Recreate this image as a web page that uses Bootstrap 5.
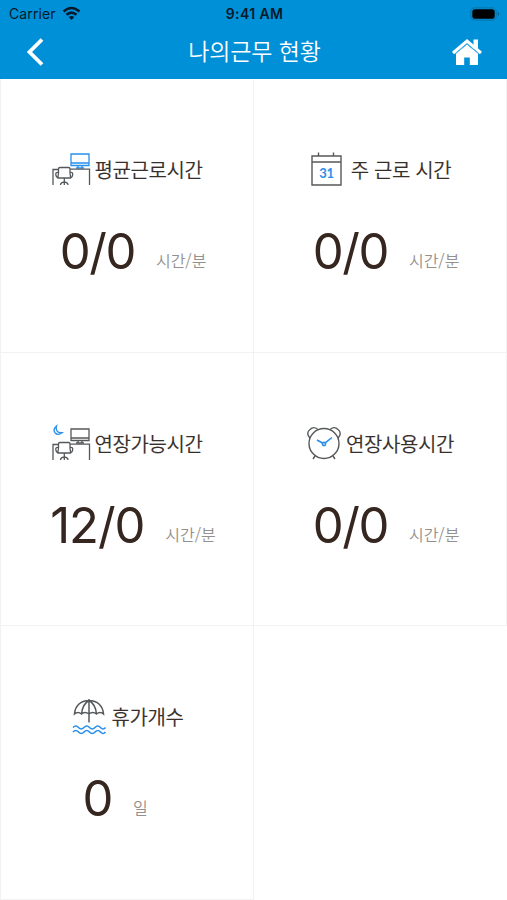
<!DOCTYPE html>
<html lang="ko">
<head>
<meta charset="utf-8">
<meta name="viewport" content="width=device-width, initial-scale=1">
<title>나의근무 현황</title>
<link href="https://cdn.jsdelivr.net/npm/bootstrap@5.3.0/dist/css/bootstrap.min.css" rel="stylesheet">
<style>
  body { font-family: Inter, "Noto Sans CJK KR", sans-serif; background: #fff; overflow: hidden; }
  svg { display: block; flex: none; }
  .top-area { background: #0090d7; height: 79px; }
  .status-line { height: 27px; padding: 0 7px 0 9px; font-size: 14px; line-height: 27px; color: #07192a; display: grid; grid-template-columns: 1fr auto 1fr; }
  .status-line .carrier { letter-spacing: .1px; }
  .status-line .clock { font-weight: 600; font-size: 14px; letter-spacing: .4px; }
  .title-line { height: 50px; padding: 0 24px 0 26px; display: grid; grid-template-columns: 1fr auto 1fr; color: #fff; }
  .title-line h1 { font: 350 23px/46px "Noto Sans CJK KR", sans-serif; letter-spacing: -.1px; }
  .tiles { height: 821px; display: grid; grid-template-columns: 254px 253px; grid-template-rows: 274px 273px 274px; }
  .tile { border: 1px solid #f2f2f2; border-width: 0 1px 1px 0; }
  .tile.edge { border-left-width: 1px; }
  .tile-label { height: 40px; margin-top: 71px; font: 350 20px/40px "Noto Sans CJK KR", sans-serif; letter-spacing: -.4px; color: #372f2a; white-space: pre; -webkit-text-stroke: .15px #372f2a; }
  .tile-label svg { -webkit-text-stroke: 0; }
  .tile-value { height: 60px; margin-top: 32px; padding-left: 12px; color: #35261f; white-space: nowrap; }
  .tile-value.days { padding-left: 0; padding-right: 24px; }
  .figure-num { font-size: 49px; line-height: 60px; letter-spacing: -1.4px; }
  .figure-num.wide { letter-spacing: -1.1px; }
  .unit { font: 350 16px/24px "Noto Sans CJK KR", sans-serif; color: #94908d; padding-bottom: 10px; margin-left: 21px; align-self: flex-end; }
  .week-text { letter-spacing: -.4px; }
</style>
</head>
<body>
<svg width="0" height="0" class="position-absolute" aria-hidden="true">
  <symbol id="monitor" viewBox="0 0 20 17"><path d="M1 1h18v11.500H1zM1 10h18M8 12.500v2.300M12 12.500v2.300M6 15h8"/></symbol>
  <symbol id="desk" viewBox="0 0 39 20"><path d="M1 19V3.500H6M18.500 3.200H37.500V19M6.500 5V2.800Q6.500 1.500 8 1.500H16.500Q18 1.500 18 2.800V7Q18.500 10 18.500 12H6Q6 10 6.500 7ZM6.300 6.500Q3.500 6.200 3.800 8.500Q4 11.500 6.500 12M18.300 6.500Q21 6.200 20.700 8.500Q20.500 11.500 18 12M12.300 12V19M8.500 19Q8.500 16.500 12.300 16Q16 16.500 16 19"/></symbol>
</svg>
<header class="top-area">
  <div class="status-line">
    <div class="d-flex align-items-center"><span class="carrier">Carrier</span>
      <svg class="ms-2" width="18" height="14" viewBox="1.500 0 18 14" fill="none" stroke="#07192a" stroke-width="2.500" overflow="visible"><path d="M1 4.500Q9-2.500 17 4.500M4 7.800Q9 3.500 14 7.800"/><path d="M6.200 10.100Q9 8 11.800 10.100L9 13Z" fill="#07192a" stroke="none"/></svg>
    </div>
    <div class="clock">9:41 AM</div>
    <div class="d-flex align-items-center justify-content-end">
      <svg width="30" height="14" viewBox="0 0 30 14"><rect x=".8" y=".8" width="25.400" height="12.400" rx="4" fill="none" stroke="#0678b3" stroke-width="1.200"/><rect x="2.300" y="2.300" width="22.400" height="9.400" rx="2.800" fill="#000"/><path d="M27.700 5v4q1.500-.5 1.500-2t-1.500-2" fill="#075f8d"/></svg>
    </div>
  </div>
  <div class="title-line">
    <div class="d-flex align-items-center"><svg width="19" height="28" viewBox="0 0 19 28" fill="none" stroke="#fff" stroke-width="3.800"><path d="M16 1.500L3.500 14L16 26.500"/></svg></div>
    <h1 class="m-0">나의근무 현황</h1>
    <div class="d-flex align-items-center justify-content-end"><svg width="32" height="28" viewBox="0 0 32 28"><path d="M2 15L16 3L30 15" fill="none" stroke="#fff" stroke-width="3"/><path d="M22.500 1.500H27V11L22.500 7.500ZM5 15.500L16 6.500L27 15.500V27H18.800V19.500H13.200V27H5Z" fill="#fff"/><path d="M4 16L16 6L28 16" fill="none" stroke="#4fb3e4" stroke-width=".9"/></svg></div>
  </div>
</header>
<main class="tiles">
  <section class="tile edge">
    <div class="tile-label d-flex justify-content-center align-items-center">
      <svg width="39" height="36" viewBox="0 0 39 36" fill="none" stroke="#55585a" stroke-width="1.300"><use href="#monitor" x="18" y="1" width="20" height="17" stroke="#278fec"/><use href="#desk" x="0" y="14" width="39" height="20"/></svg><span class="ms-1">평균근로시간</span>
    </div>
    <div class="tile-value d-flex justify-content-center align-items-baseline"><span class="figure-num">0/0</span><span class="unit">시간/분</span></div>
  </section>
  <section class="tile">
    <div class="tile-label d-flex justify-content-center align-items-center">
      <svg width="34" height="36" viewBox="0 0 34 36" fill="none" stroke="#55585a" stroke-width="1.400"><path d="M3 4H32V33H3ZM3 10H32M9.500 .500V4M24.500 .500V4"/><text x="17.500" y="26" text-anchor="middle" font-family="Lato, sans-serif" font-size="13" font-weight="700" letter-spacing="-.3" fill="#278fec" stroke="none">31</text></svg><span class="week-text ms-2 ps-0">주 근로 시간</span>
    </div>
    <div class="tile-value d-flex justify-content-center align-items-baseline"><span class="figure-num">0/0</span><span class="unit">시간/분</span></div>
  </section>
  <section class="tile edge">
    <div class="tile-label d-flex justify-content-center align-items-center">
      <svg width="39" height="40" viewBox="0 0 39 40" fill="none" stroke="#55585a" stroke-width="1.300"><path d="M4.500 2Q.5 5.500 3 8.700Q6 12 10 8.700Q6 9 4.800 6.500Q3.800 4.500 4.500 2Z" stroke="#278fec"/><use href="#monitor" x="18" y="4" width="20" height="17"/><use href="#desk" x="0" y="17" width="39" height="20"/></svg><span class="ms-1">연장가능시간</span>
    </div>
    <div class="tile-value d-flex justify-content-center align-items-baseline"><span class="figure-num wide">12/0</span><span class="unit">시간/분</span></div>
  </section>
  <section class="tile">
    <div class="tile-label d-flex justify-content-center align-items-center">
      <svg width="36" height="36" viewBox="0 0 36 36" fill="none" stroke="#55585a" stroke-width="1.400"><circle cx="18" cy="17.500" r="15"/><path d="M4 12Q-.5 7 4 3.500Q8-.5 12.500 4M23.500 4Q28-.5 32 3.500Q36.500 7 32 12M9 30L7 33M27 30L29 33"/><g stroke="#278fec" stroke-width="1.600"><path d="M11 14L16.500 17M19.500 16.700L26 11.500"/><circle cx="18" cy="18" r="1.600"/></g></svg><span class="ms-1">연장사용시간</span>
    </div>
    <div class="tile-value d-flex justify-content-center align-items-baseline"><span class="figure-num">0/0</span><span class="unit">시간/분</span></div>
  </section>
  <section class="tile edge">
    <div class="tile-label d-flex justify-content-center align-items-center">
      <svg width="37" height="38" viewBox="0 0 37 38" fill="none" stroke="#55585a" stroke-width="1.500"><path d="M3.500 16C4 8 9.500 2.500 18 2.500S32 8 32.500 16Q29 13 25.500 16Q21.500 13 18 16Q14 13 10.500 16Q7 13 3.500 16ZM10.500 16Q11.500 6 18 2.500Q24.500 6 25.500 16M18 1V24.500"/><g stroke="#278fec" stroke-width="1.600"><path d="M2 29.500q2.750-3 5.500 0t5.500 0t5.500 0t5.500 0t5.500 0t5 0M2 34q2.750-3 5.500 0t5.500 0t5.500 0t5.500 0t5.500 0t5 0"/></g></svg><span class="ms-1">휴가개수</span>
    </div>
    <div class="tile-value days d-flex justify-content-center align-items-baseline"><span class="figure-num">0</span><span class="unit">일</span></div>
  </section>
</main>
<script src="https://cdn.jsdelivr.net/npm/bootstrap@5.3.0/dist/js/bootstrap.bundle.min.js"></script>
</body>
</html>
